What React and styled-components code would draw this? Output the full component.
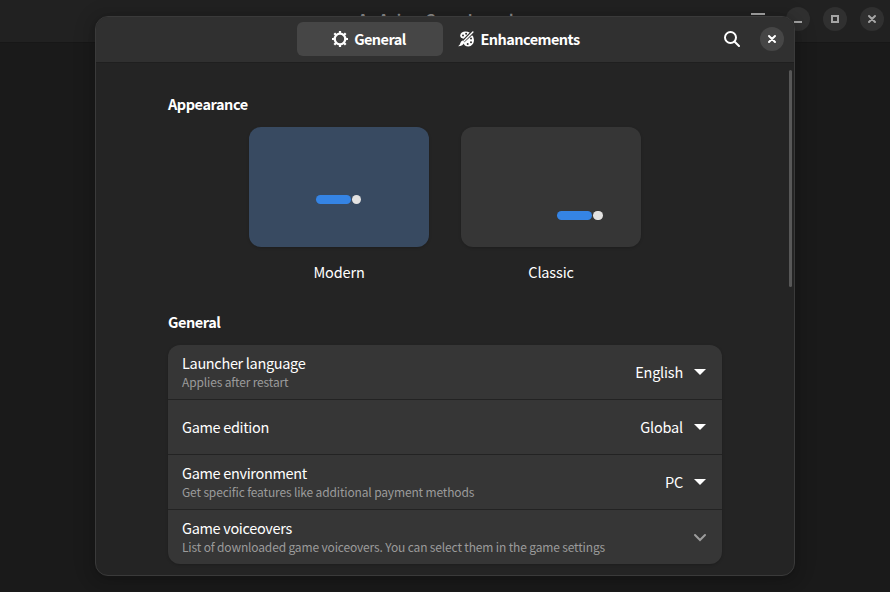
import React from 'react';
import styled, { createGlobalStyle } from 'styled-components';

const Global = createGlobalStyle`
  * { box-sizing: border-box; }
  body { margin: 0; overflow: hidden; background: #1a1a1a; color: #fff; font: 400 14.5px/20px "Noto Sans CJK SC", "Noto Sans", sans-serif; letter-spacing: -0.35px; }
  button { font: inherit; letter-spacing: inherit; color: inherit; border: 0; padding: 0; background: none; }
  svg { display: block; flex: none; }
`;

const Desktop = styled.main`
  position: relative;
  width: 890px;
  height: 592px;
  overflow: hidden;
  background: #1a1a1a;
`;

const TitleBar = styled.header`
  display: grid;
  grid-template-columns: 1fr auto 1fr;
  align-items: start;
  height: 43px;
  background: #212121;
  border-bottom: 1px solid #171717;
`;

const WindowTitle = styled.h1`
  grid-column: 2;
  margin: 9px 0 0;
  font-size: 14.5px;
  line-height: 20px;
  font-weight: 700;
  letter-spacing: -0.4px;
  color: #8c8c8c;
`;

const WindowControls = styled.div`
  display: flex;
  justify-content: flex-end;
  align-items: center;
  gap: 13px;
  padding: 7px 6px 0 0;
  color: #a5a5a5;
`;

const RoundButton = styled.button`
  display: grid;
  place-items: center;
  width: 24px;
  height: 24px;
  border-radius: 50%;
  background: ${p => p.$bright ? '#464646' : '#303030'};
`;

const MenuButton = styled.button`
  display: grid;
  place-items: center;
  width: 24px;
  height: 24px;
  margin-right: 3px;
`;

const Dialog = styled.section`
  position: absolute;
  left: 95px;
  top: 16px;
  width: 700px;
  height: 560px;
  display: flex;
  flex-direction: column;
  overflow: hidden;
  border: 1px solid #3a3a3a;
  border-radius: 13px;
  background: #242424;
  box-shadow: 0 3px 10px 4px rgba(0, 0, 0, 0.12), 0 2px 25px 1px rgba(0, 0, 0, 0.1);
`;

const DialogHeader = styled.header`
  display: grid;
  grid-template-columns: 1fr auto 1fr;
  align-items: center;
  flex: none;
  height: 46px;
  padding-bottom: 1px;
  background: #303030;
  border-bottom: 1px solid #1f1f1f;
`;

const Tabs = styled.nav`
  grid-column: 2;
  display: flex;
  gap: 4px;
`;

const Tab = styled.button`
  display: flex;
  align-items: center;
  justify-content: center;
  gap: 6px;
  width: 146px;
  height: 34px;
  padding-right: 2px;
  border-radius: 6px;
  background: ${p => p.$active ? '#464646' : 'transparent'};
  font-weight: 700;
  letter-spacing: -0.55px;
`;

const HeaderActions = styled.div`
  display: flex;
  justify-content: flex-end;
  align-items: center;
  gap: 20px;
  padding-right: 10px;
`;

const Scroller = styled.div`
  display: flex;
  justify-content: space-between;
  flex: 1;
  min-height: 0;
  padding: 0 2px 0 72px;
`;

const Page = styled.div`
  width: 554px;
  padding-top: 31px;
`;

const Scrollbar = styled.div`
  width: 3px;
  height: 217px;
  margin-top: 7px;
  border-radius: 2px;
  background: #575757;
`;

const Heading = styled.h2`
  margin: 0;
  font-size: 14.5px;
  line-height: 20px;
  font-weight: 700;
  letter-spacing: -0.45px;
`;

const Styles = styled.div`
  display: flex;
  justify-content: center;
  gap: 32px;
  margin: 13px 0 30px;
`;

const StyleOption = styled.div`
  display: flex;
  flex-direction: column;
  align-items: center;
  gap: 15px;
  width: 180px;
  letter-spacing: -0.15px;
`;

const Preview = styled.div`
  display: flex;
  justify-content: ${p => p.$corner ? 'flex-end' : 'center'};
  align-items: flex-end;
  gap: 1px;
  width: 180px;
  height: 120px;
  padding: ${p => p.$corner ? '0 38.5px 27px 0' : '0 1px 43px 0'};
  border-radius: 12px;
  background: ${p => p.$active ? '#384a61' : '#363636'};
  box-shadow: 0 1px 3px rgba(0, 0, 0, 0.18);
`;

const Bar = styled.span`
  width: 35px;
  height: 9px;
  border-radius: 5px;
  background: #3584e4;
`;

const Dot = styled.span`
  width: 9.5px;
  height: 9.5px;
  border-radius: 50%;
  background: #e3e2e1;
`;

const List = styled.div`
  margin-top: 13px;
  border-radius: 12px;
  background: #363636;
  box-shadow: 0 1px 3px rgba(0, 0, 0, 0.2);
`;

const Row = styled.div`
  display: flex;
  align-items: center;
  justify-content: space-between;
  height: 55px;
  padding: 0 14px;
  &:first-child { height: 54px; }
  & + & { border-top: 1px solid #232323; }
`;

const Label = styled.div`
  display: flex;
  flex-direction: column;
  letter-spacing: -0.33px;
`;

const Subtitle = styled.span`
  font-size: 12px;
  line-height: 18px;
  letter-spacing: -0.15px;
  color: #9b9b9b;
`;

const Value = styled.div`
  display: flex;
  align-items: center;
  gap: 9px;
  letter-spacing: -0.2px;
`;

const Gear = () => (
  <svg width="16" height="16" viewBox="0 0 16 16" fill="none" stroke="currentColor">
    <circle cx="8" cy="8" r="5.3" strokeWidth="2.3" />
    <path strokeWidth="2.2" d="M8 0v2.4M8 13.6v2.4M0 8h2.4M13.6 8h2.4M2.3 2.3l1.8 1.8M11.9 11.9l1.8 1.8M13.7 2.3l-1.8 1.8M4.1 11.9l-1.8 1.8" />
  </svg>
);

const Palette = () => (
  <svg width="16" height="16" viewBox="0 0 16 16">
    <path fill="currentColor" d="M2.2 4.6C2.4 2 4.7.5 7.4.5c1.7 0 3.1.4 4.3 1.1L5.6 7.7C3.5 7.7 2.1 6.4 2.2 4.6z" />
    <path fill="currentColor" d="M14.1 4.3c1.2 1.4 1.8 3.2 1.8 5 0 3.4-2.4 6.1-5.5 6.1-2.9 0-4.7-1.5-4.8-3.4z" />
    <path fill="none" stroke="currentColor" strokeWidth="1.4" strokeLinecap="round" d="M14.9 1.1L6 10" />
    <path fill="currentColor" d="M4.9 9.5l1.8 1.7C5.7 13.5 3.3 15.2 0 15.3c1.6-.9 2-2.1 2.5-3.6.4-1.2 1.2-2 2.4-2.2z" />
    <g fill="#303030">
      <circle cx="5" cy="4.6" r="1" />
      <circle cx="8.1" cy="2.8" r="1" />
      <circle cx="13" cy="7.6" r="1" />
      <circle cx="13" cy="11.2" r="1" />
      <circle cx="9.7" cy="12.9" r="1" />
    </g>
  </svg>
);

const Search = () => (
  <svg width="16" height="16" viewBox="0 0 16 16" fill="none" stroke="currentColor" strokeWidth="2">
    <circle cx="6.5" cy="6.5" r="5.5" /><path strokeLinecap="round" d="M10.7 10.7L15 15" />
  </svg>
);

const Cross = () => (
  <svg width="16" height="16" viewBox="0 0 16 16" stroke="currentColor" strokeWidth="2" strokeLinecap="round">
    <path d="M5 5l6 6M11 5l-6 6" />
  </svg>
);

const Square = () => (
  <svg width="16" height="16" viewBox="0 0 16 16" fill="none" stroke="currentColor" strokeWidth="2"><path d="M5 5h6v6H5z" /></svg>
);

const Minus = () => (
  <svg width="16" height="16" viewBox="0 0 16 16" fill="currentColor"><path d="M4 10h8v2H4z" /></svg>
);

const Burger = () => (
  <svg width="16" height="16" viewBox="0 0 16 16" fill="currentColor"><path d="M1 2h14v2H1zM1 7h14v2H1zM1 12h14v2H1z" /></svg>
);

const Caret = () => (
  <svg width="16" height="16" viewBox="0 0 16 16" fill="currentColor"><path d="M2 5h12L8 11z" /></svg>
);

const Chevron = () => (
  <svg width="16" height="16" viewBox="0 0 16 16" fill="none" stroke="#9d9d9d" strokeWidth="2" strokeLinecap="round"><path d="M3 6l5 5 5-5" /></svg>
);

const rows = [
  { title: 'Launcher language', sub: 'Applies after restart', value: 'English' },
  { title: 'Game edition', value: 'Global' },
  { title: 'Game environment', sub: 'Get specific features like additional payment methods', value: 'PC' },
  { title: 'Game voiceovers', sub: 'List of downloaded game voiceovers. You can select them in the game settings' },
];

export default function App() {
  return (
    <>
      <Global />
      <Desktop>
        <TitleBar>
          <WindowTitle>An Anime Game Launcher</WindowTitle>
          <WindowControls>
            <MenuButton aria-label="Menu"><Burger /></MenuButton>
            <RoundButton aria-label="Minimize"><Minus /></RoundButton>
            <RoundButton aria-label="Maximize"><Square /></RoundButton>
            <RoundButton aria-label="Close window"><Cross /></RoundButton>
          </WindowControls>
        </TitleBar>
        <Dialog>
          <DialogHeader>
            <Tabs>
              <Tab $active><Gear />General</Tab>
              <Tab><Palette />Enhancements</Tab>
            </Tabs>
            <HeaderActions>
              <Search />
              <RoundButton $bright aria-label="Close"><Cross /></RoundButton>
            </HeaderActions>
          </DialogHeader>
          <Scroller>
            <Page>
              <Heading>Appearance</Heading>
              <Styles>
                <StyleOption><Preview $active><Bar /><Dot /></Preview>Modern</StyleOption>
                <StyleOption><Preview $corner><Bar /><Dot /></Preview>Classic</StyleOption>
              </Styles>
              <Heading>General</Heading>
              <List>
                {rows.map(r => (
                  <Row key={r.title}>
                    <Label>{r.title}{r.sub && <Subtitle>{r.sub}</Subtitle>}</Label>
                    {r.value ? <Value>{r.value}<Caret /></Value> : <Chevron />}
                  </Row>
                ))}
              </List>
            </Page>
            <Scrollbar />
          </Scroller>
        </Dialog>
      </Desktop>
    </>
  );
}
